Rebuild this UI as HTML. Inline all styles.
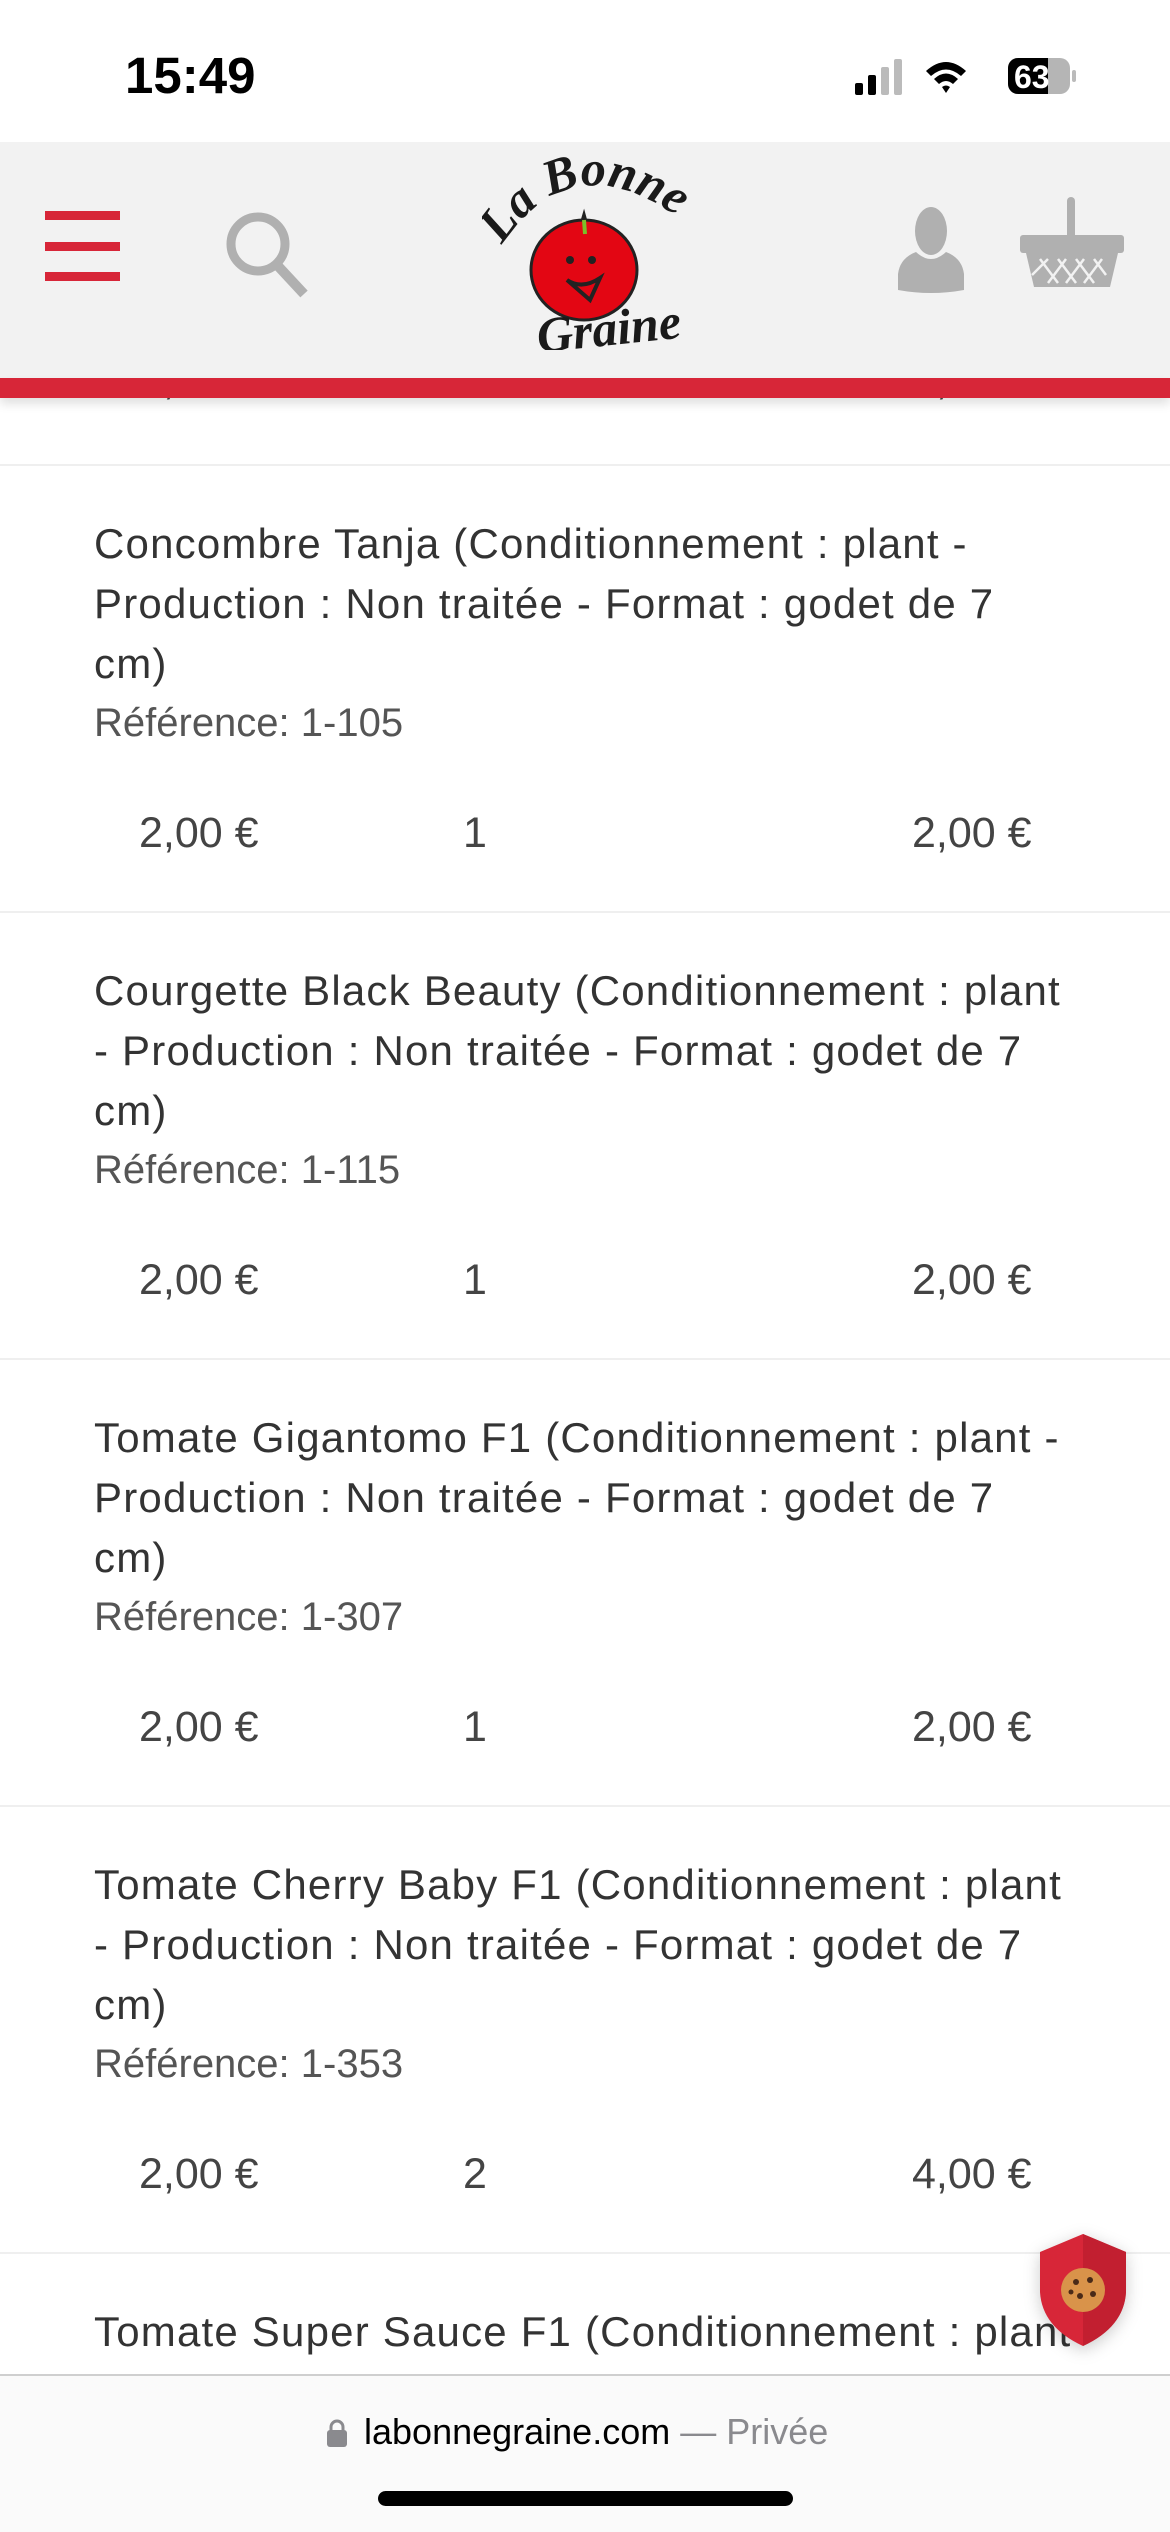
<!DOCTYPE html>
<html><head><meta charset="utf-8"><style>
*{margin:0;padding:0;box-sizing:border-box}
body{width:1170px;height:2532px;position:relative;overflow:hidden;background:#fff;font-family:"Liberation Sans",sans-serif;color:#3b3b3b}
.abs{position:absolute}
.sep{position:absolute;left:0;width:1170px;height:2px;background:#efefef}
.title{position:absolute;left:94px;font-size:42px;line-height:60px;color:#333;white-space:nowrap;letter-spacing:1.2px}
.ref{position:absolute;left:94px;font-size:40px;color:#555;white-space:nowrap}
.p{position:absolute;font-size:43px;color:#444;white-space:nowrap}
</style></head><body>

<!-- partial row under header -->
<div class="p" style="left:139px;top:356px">2,00 €</div>
<div class="p" style="left:465px;top:356px">1</div>
<div class="p" style="left:912px;top:356px">2,00 €</div>

<!-- status bar -->
<div class="abs" style="left:0;top:0;width:1170px;height:142px;background:#fff"></div>
<div class="abs" style="left:125px;top:46px;font-size:51px;font-weight:bold;color:#000">15:49</div>
<svg class="abs" style="left:850px;top:55px" width="240" height="45">
<rect x="5" y="28" width="8" height="12" rx="2" fill="#000"/>
<rect x="18" y="20" width="8" height="20" rx="2" fill="#000"/>
<rect x="31" y="12" width="8" height="28" rx="2" fill="#bbb"/>
<rect x="44" y="4" width="8" height="36" rx="2" fill="#bbb"/>
<path d="M76 16 Q96 -2 116 16 L111 21 Q96 8 81 21Z M84 24 Q96 13 108 24 L103 29 Q96 23 89 29Z M92 32 L96 38 L100 32 Q96 29 92 32Z" fill="#000"/>
<rect x="158" y="3" width="62" height="36" rx="10" fill="#b5b5b5"/>
<path d="M168 3 H198 V39 H168 A10 10 0 0 1 158 29 V13 A10 10 0 0 1 168 3Z" fill="#000"/>
<text x="164" y="33" font-family="Liberation Sans" font-weight="bold" font-size="32" fill="#fff">63</text>
<rect x="222" y="15" width="4" height="12" rx="2" fill="#bbb"/>
</svg>

<!-- header -->
<div class="abs" style="left:0;top:142px;width:1170px;height:236px;background:#f2f2f2"></div>
<div class="abs" style="left:0;top:378px;width:1170px;height:20px;background:#d72638;box-shadow:0 6px 10px rgba(0,0,0,0.12)"></div>
<div class="abs" style="left:45px;top:211px;width:75px;height:9px;background:#d72638"></div>
<div class="abs" style="left:45px;top:242px;width:75px;height:9px;background:#d72638"></div>
<div class="abs" style="left:45px;top:272px;width:75px;height:9px;background:#d72638"></div>
<svg class="abs" style="left:224px;top:210px" width="90" height="90">
<circle cx="34" cy="34" r="27" fill="none" stroke="#b0b0b0" stroke-width="9"/>
<line x1="54" y1="56" x2="80" y2="84" stroke="#b0b0b0" stroke-width="10"/>
</svg>
<svg class="abs" style="left:894px;top:204px" width="75" height="92">
<ellipse cx="37" cy="27" rx="16" ry="24" fill="#b0b0b0"/>
<path d="M22 48 Q37 62 52 48 Q68 54 70 70 V86 Q37 92 4 86 V70 Q6 54 22 48Z" fill="#b0b0b0"/>
</svg>
<svg class="abs" style="left:1018px;top:195px" width="110" height="100">
<rect x="49" y="2" width="8" height="50" rx="4" fill="#b0b0b0"/>
<rect x="2" y="40" width="104" height="18" rx="3" fill="#b0b0b0"/>
<path d="M8 58 H100 L92 92 H16Z" fill="#b0b0b0"/>
<path d="M22 64 L40 88 M40 64 L58 88 M58 64 L76 88 M76 64 L88 80 M30 64 L14 80 M48 64 L30 88 M66 64 L48 88 M84 64 L66 88" stroke="#f2f2f2" stroke-width="2.5"/>
</svg>
<!-- logo -->
<svg class="abs" style="left:482px;top:150px" width="210" height="200">
<defs><path id="arc" d="M20 95 Q90 -10 200 70"/></defs>
<text font-family="Liberation Serif" font-style="italic" font-weight="bold" font-size="50" fill="#1a1a1a"><textPath href="#arc">La Bonne</textPath></text>
<path d="M60 95 Q80 75 95 90 L102 66 L108 88 Q125 75 140 92" stroke="#222" stroke-width="4" fill="none"/>
<ellipse cx="102" cy="120" rx="53" ry="50" fill="#e30613" stroke="#222" stroke-width="3"/>
<path d="M102 70 L103 84" stroke="#7bbf2a" stroke-width="4"/>
<circle cx="88" cy="110" r="4" fill="#222"/><circle cx="110" cy="110" r="4" fill="#222"/>
<path d="M85 130 Q100 140 118 128 L108 150Z" fill="#e30613" stroke="#222" stroke-width="4"/>
<text x="55" y="198" font-family="Liberation Serif" font-style="italic" font-weight="bold" font-size="50" fill="#1a1a1a" transform="rotate(-6 100 185)">Graine</text>
</svg>

<div class="sep" style="top:464px"></div>

<!-- rows -->
<div class="title" style="top:514px">Concombre Tanja (Conditionnement : plant -<br>Production : Non traitée - Format : godet de 7<br>cm)</div>
<div class="ref" style="top:701px">Référence: 1-105</div>
<div class="p" style="left:139px;top:809px">2,00 €</div>
<div class="p" style="left:463px;top:809px">1</div>
<div class="p" style="left:912px;top:809px">2,00 €</div>
<div class="sep" style="top:911px"></div>

<div class="title" style="top:961px">Courgette Black Beauty (Conditionnement : plant<br>- Production : Non traitée - Format : godet de 7<br>cm)</div>
<div class="ref" style="top:1148px">Référence: 1-115</div>
<div class="p" style="left:139px;top:1256px">2,00 €</div>
<div class="p" style="left:463px;top:1256px">1</div>
<div class="p" style="left:912px;top:1256px">2,00 €</div>
<div class="sep" style="top:1358px"></div>

<div class="title" style="top:1408px">Tomate Gigantomo F1 (Conditionnement : plant -<br>Production : Non traitée - Format : godet de 7<br>cm)</div>
<div class="ref" style="top:1595px">Référence: 1-307</div>
<div class="p" style="left:139px;top:1703px">2,00 €</div>
<div class="p" style="left:463px;top:1703px">1</div>
<div class="p" style="left:912px;top:1703px">2,00 €</div>
<div class="sep" style="top:1805px"></div>

<div class="title" style="top:1855px">Tomate Cherry Baby F1 (Conditionnement : plant<br>- Production : Non traitée - Format : godet de 7<br>cm)</div>
<div class="ref" style="top:2042px">Référence: 1-353</div>
<div class="p" style="left:139px;top:2150px">2,00 €</div>
<div class="p" style="left:463px;top:2150px">2</div>
<div class="p" style="left:912px;top:2150px">4,00 €</div>
<div class="sep" style="top:2252px"></div>

<div class="title" style="top:2302px">Tomate Super Sauce F1 (Conditionnement : plant</div>

<!-- cookie shield -->
<svg class="abs" style="left:1036px;top:2232px;filter:drop-shadow(0 4px 8px rgba(0,0,0,0.2))" width="94" height="116">
<path d="M47 2 L90 20 V60 Q88 95 47 114 Q6 95 4 60 V20Z" fill="#d72638"/>
<path d="M47 2 L90 20 V60 Q88 95 47 114Z" fill="#c21f30"/>
<circle cx="47" cy="58" r="22" fill="#d9934a"/>
<circle cx="40" cy="50" r="3" fill="#4a2a18"/><circle cx="54" cy="48" r="3" fill="#4a2a18"/><circle cx="44" cy="64" r="3" fill="#4a2a18"/><circle cx="57" cy="62" r="3" fill="#4a2a18"/><circle cx="35" cy="60" r="2.5" fill="#4a2a18"/>
</svg>

<!-- bottom bar -->
<div class="abs" style="left:0;top:2374px;width:1170px;height:158px;background:#fafafa;border-top:2px solid #cfcfcf"></div>
<svg class="abs" style="left:326px;top:2418px" width="22" height="30">
<path d="M5 13 V9 A6 6 0 0 1 17 9 V13" stroke="#8a8a8e" stroke-width="3" fill="none"/>
<rect x="1" y="12" width="20" height="17" rx="3" fill="#8a8a8e"/>
</svg>
<div class="abs" style="left:364px;top:2411px;font-size:36px;color:#000;white-space:nowrap">labonnegraine.com <span style="color:#8a8a8e">— Privée</span></div>
<div class="abs" style="left:378px;top:2491px;width:415px;height:15px;border-radius:8px;background:#000"></div>
</body></html>
